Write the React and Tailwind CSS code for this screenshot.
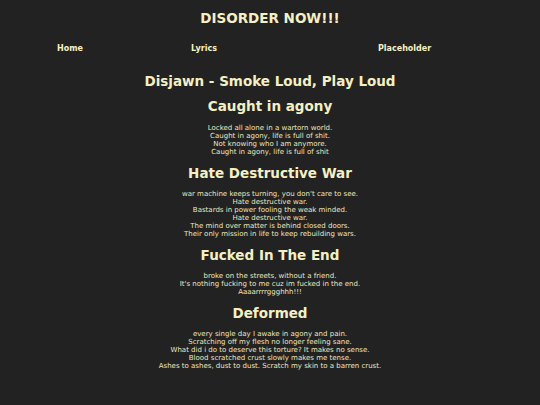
export default function App() {
  const sections = [
    {
      title: "Caught in agony",
      lines: [
        "Locked all alone in a wartorn world.",
        "Caught in agony, life is full of shit.",
        "Not knowing who I am anymore.",
        "Caught in agony, life is full of shit",
      ],
    },
    {
      title: "Hate Destructive War",
      lines: [
        "war machine keeps turning, you don't care to see.",
        "Hate destructive war.",
        "Bastards in power fooling the weak minded.",
        "Hate destructive war.",
        "The mind over matter is behind closed doors.",
        "Their only mission in life to keep rebuilding wars.",
      ],
    },
    {
      title: "Fucked In The End",
      lines: [
        "broke on the streets, without a friend.",
        "It's nothing fucking to me cuz im fucked in the end.",
        "Aaaarrrrggghhh!!!",
      ],
    },
    {
      title: "Deformed",
      lines: [
        "every single day I awake in agony and pain.",
        "Scratching off my flesh no longer feeling sane.",
        "What did i do to deserve this torture? It makes no sense.",
        "Blood scratched crust slowly makes me tense.",
        "Ashes to ashes, dust to dust. Scratch my skin to a barren crust.",
      ],
    },
  ];
  return (
    <div className="min-h-[405px] bg-[#222222] text-[#f5f0c4] text-center font-['DejaVu_Sans',sans-serif] pb-6">
      <h1 className="pt-[10px] text-[13.5px] leading-[16px] font-bold">DISORDER NOW!!!</h1>
      <nav className="mt-[18px] flex pl-[57px] text-[8px] leading-[10px] font-bold text-left">
        <a className="w-[134px]">Home</a>
        <a className="w-[187px]">Lyrics</a>
        <a>Placeholder</a>
      </nav>
      <h2 className="mt-[18px] text-[13.5px] leading-[18px] font-bold">Disjawn - Smoke Loud, Play Loud</h2>
      {sections.map((s, i) => (
        <section key={s.title}>
          <h3 className={`${i === 0 ? "mt-[7px] mb-[9px]" : "mt-[8px] mb-[8px]"} text-[13.5px] leading-[18px] font-bold`}>{s.title}</h3>
          <div className="text-[7px] leading-[8px] text-[#ece7c0]">
            {s.lines.map((l, j) => (
              <p key={j}>{l}</p>
            ))}
          </div>
        </section>
      ))}
    </div>
  );
}
